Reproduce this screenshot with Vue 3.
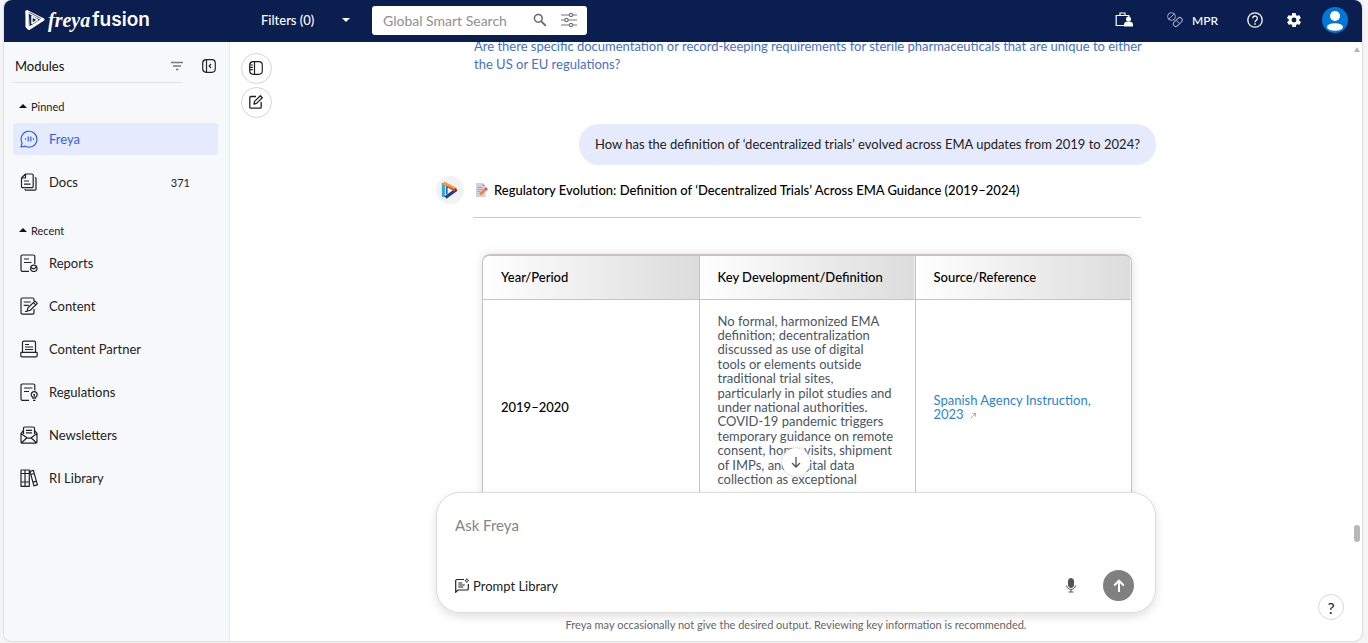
<script setup>
import { ref } from 'vue'

const search = ref('')
const prompt = ref('')

const pinned = [
  { name: 'Freya', icon: 'chat', active: true },
  { name: 'Docs', icon: 'docs', count: 371 },
]
const recent = [
  { name: 'Reports', icon: 'reports' },
  { name: 'Content', icon: 'content' },
  { name: 'Content Partner', icon: 'partner' },
  { name: 'Regulations', icon: 'regulations' },
  { name: 'Newsletters', icon: 'news' },
  { name: 'RI Library', icon: 'library' },
]
const groups = [
  { title: 'Pinned', items: pinned },
  { title: 'Recent', items: recent },
]

const icons = {
  chat: 'M1 17l1.1-4A7.9 7.9 0 1 1 5.4 16.200z M5.500 8.200v1.600 M8.200 6.500v5 M10.800 6.500v5 M13.400 8.200v1.600',
  docs: 'M5.500 1H12a1.200 1.200 0 0 1 1.200 1.200v11.300a1.200 1.200 0 0 1-1.200 1.200H2.700a1.200 1.200 0 0 1-1.200-1.200V5z M5.500 1v4h-4 M4 8h5 M4 11.200h6.500 M14.800 4.500h.2a1 1 0 0 1 1 1V16a1.200 1.200 0 0 1-1.200 1.200H6a1 1 0 0 1-1-1V16',
  reports: 'M9 17.300H2.300A1.300 1.300 0 0 1 1 16V2.300A1.300 1.300 0 0 1 2.300 1h11.200a1.300 1.300 0 0 1 1.300 1.300V10 M4 5h5 M4 8.500h7.500 M17 14.300a3.200 3.200 0 1 1-6.400 0a3.200 3.200 0 1 1 6.400 0 M10.800 13.500l2.800 1.500 3-2',
  content: 'M14 12v3.800a1.400 1.400 0 0 1-1.400 1.400H2.400A1.400 1.400 0 0 1 1 15.800V2.400A1.400 1.400 0 0 1 2.400 1h10.200A1.400 1.400 0 0 1 14 2.400V4 M3.700 5h7 M3.700 8.300h5 M7 14.300l1-3.500 7-6.700 2.300 2.300-7 6.900z M5 14.500h2 M13.500 5.700l2.200 2.200',
  partner: 'M2.500 12V2.500A1.300 1.300 0 0 1 3.800 1.200h10.400a1.300 1.300 0 0 1 1.300 1.300V12 M1.500 12.300h15a.7.7 0 0 1 .7.7v2.500a1.300 1.300 0 0 1-1.300 1.300H2.100a1.300 1.300 0 0 1-1.300-1.300V13a.7.7 0 0 1 .7-.7z M5 4.500h4 M5 7h8 M5 9.500h8',
  regulations: 'M9 17.300H2.300A1.300 1.300 0 0 1 1 16V2.300A1.300 1.300 0 0 1 2.300 1h11.200a1.300 1.300 0 0 1 1.300 1.300V7.500 M4 5h8.500 M4 8.500h5 M12.800 15.200v-.9a3 3 0 1 1 2.800 0v.9z M13 17.300h2.400 M14.200 12v2 M13.300 11.500h1.800',
  news: 'M3.500 8V2.300A1.300 1.300 0 0 1 4.800 1h8.400a1.300 1.300 0 0 1 1.300 1.300V8 M3.500 4.500L1 7.300V16a1.200 1.200 0 0 0 1.200 1.200h13.600A1.200 1.200 0 0 0 17 16V7.300l-2.500-2.800 M1 7.500l6.500 4.700h3L17 7.500 M1.500 16.800l5.500-5 M16.500 16.800l-5.500-5 M6 4.300h6 M6 6.800h6',
  library: 'M1 1h4v16.300H1z M5 1h4.300v16.300H5z M1 4.500h8.300 M1 13h8.300 M10 2.300l3.400-1 4 14.500-3.500 1z M10.800 5.500l3.500-1 M13 13.200l3.500-1',
}

const columns = ['Year/Period', 'Key Development/Definition', 'Source/Reference']
const definition = [
  'No formal, harmonized EMA',
  'definition; decentralization',
  'discussed as use of digital',
  'tools or elements outside',
  'traditional trial sites,',
  'particularly in pilot studies and',
  'under national authorities.',
  'COVID-19 pandemic triggers',
  'temporary guidance on remote',
  'consent, home visits, shipment',
  'of IMPs, and digital data',
  'collection as exceptional',
  'measures.',
]
</script>

<template>
  <div class="frame">
    <header class="topbar">
      <a class="brand" href="#" aria-label="freya fusion">
        <svg width="20" height="22" viewBox="0 0 20 22" fill="none" stroke="#fff" stroke-linejoin="round">
          <path d="M2 2.500L18 10.500 4 19.500z" stroke-width="3" />
          <path d="M1.700 2v15.500L4 20" stroke-width="2.500" />
          <path d="M7 7.500v7l5.500-3.700z" stroke-width="1.500" />
          <path d="M4.200 4.500v12.700 M4.500 3.500l11.500 6" stroke="#0b1e50" stroke-width="0.700" />
        </svg>
        <span class="freya">freya</span><span class="fusion">fusion</span>
      </a>
      <button class="filters" type="button">
        <span>Filters (0)</span>
        <svg width="8" height="4" viewBox="0 0 8 4"><path d="M0 0h8L4 4z" fill="#fff" /></svg>
      </button>
      <div class="search">
        <input v-model="search" type="text" placeholder="Global Smart Search" aria-label="Global Smart Search" />
        <button type="button" aria-label="Search">
          <svg width="14" height="14" viewBox="0 0 14 14" fill="none" stroke="#666" stroke-width="1.500"><circle cx="5.300" cy="5.300" r="3.900" /><path d="M8.300 8.300l4.500 4.500" stroke-width="1.800" /></svg>
        </button>
        <button type="button" aria-label="Search options">
          <svg width="16" height="16" viewBox="0 0 16 16" fill="#fff" stroke="#777" stroke-width="1.200"><path d="M0 3h16M0 8h16M0 13h16" /><circle cx="10" cy="3" r="1.700" /><circle cx="5.500" cy="8" r="1.700" /><circle cx="10" cy="13" r="1.700" /></svg>
        </button>
      </div>
      <div class="tools">
        <button type="button" aria-label="Workspace">
          <svg width="18" height="16" viewBox="0 0 18 16"><path d="M9.500 13.500H1.200V3.500h12.600v2 M5 3.500V1h5v2.500" fill="none" stroke="#fff" stroke-width="1.200" /><circle cx="13.500" cy="7" r="2.500" fill="#fff" /><path d="M9 14.500v-2c0-2 1.500-3 4.500-3s4.500 1 4.500 3v2z" fill="#fff" /></svg>
        </button>
        <button class="mpr" type="button">
          <svg width="16" height="16" viewBox="0 0 16 16" fill="none" stroke="#a6aec6" stroke-width="1"><circle cx="4.500" cy="4.500" r="3.900" /><path d="M1.800 7.200l5.400-5.400" /><rect x="5.500" y="7.500" width="10.500" height="5" rx="2.500" transform="rotate(-45 10.750 10)" /><path d="M9 8.200l3.500 3.500" /></svg>
          <span>MPR</span>
        </button>
        <button type="button" aria-label="Help">
          <svg width="16" height="16" viewBox="0 0 16 16" fill="none" stroke="#fff" stroke-width="1.300"><circle cx="8" cy="8" r="7.200" /><path d="M5.700 6.300a2.300 2.300 0 1 1 3.600 1.900C8.300 8.900 8 9.200 8 10.200" /><path d="M8 11.300v1.500" stroke-width="1.500" /></svg>
        </button>
        <button type="button" aria-label="Settings">
          <svg width="14" height="14" viewBox="2 2 20 20"><path fill="#fff" d="M19.400 13a7.500 7.500 0 0 0 0-2l2.100-1.600a.5.5 0 0 0 .1-.7l-2-3.400a.5.5 0 0 0-.6-.2l-2.500 1a7.300 7.300 0 0 0-1.700-1l-.4-2.700a.5.500 0 0 0-.5-.4h-4a.5.500 0 0 0-.5.4l-.4 2.700a7.300 7.300 0 0 0-1.700 1l-2.500-1a.5.500 0 0 0-.6.200l-2 3.400a.5.500 0 0 0 .1.700L4.600 11a7.500 7.500 0 0 0 0 2l-2.100 1.600a.5.500 0 0 0-.1.700l2 3.400c.1.200.4.300.6.200l2.500-1a7.300 7.300 0 0 0 1.700 1l.4 2.700c0 .2.200.4.500.4h4c.3 0 .5-.2.500-.4l.4-2.700a7.300 7.300 0 0 0 1.700-1l2.500 1c.2.100.5 0 .6-.2l2-3.400a.5.500 0 0 0-.1-.7zM12 15.500a3.500 3.500 0 1 1 0-7 3.500 3.500 0 0 1 0 7z" /></svg>
        </button>
        <button type="button" aria-label="Account">
          <svg width="26" height="26" viewBox="0 0 26 26"><circle cx="13" cy="13" r="13" fill="#0078d9" /><circle cx="13" cy="9" r="5" fill="#fff" /><ellipse cx="13" cy="20" rx="8" ry="3.800" fill="#fff" /></svg>
        </button>
      </div>
    </header>

    <div class="body">
      <aside class="sidebar">
        <div class="side-head">
          <h2>Modules</h2>
          <button type="button" aria-label="Sort modules">
            <svg width="12" height="10" viewBox="0 0 12 10" stroke="#777" stroke-width="1.400"><path d="M0 1.500h12M2 5h8M5 8.500h2.500" /></svg>
          </button>
          <button type="button" aria-label="Collapse sidebar">
            <svg width="14" height="14" viewBox="0 0 14 14" fill="none" stroke="#222" stroke-width="1.200"><rect x="0.700" y="0.700" width="12.600" height="12.600" rx="3.500" /><path d="M4.500 0.700v12.600M9 5L7.200 7 9 9" /></svg>
          </button>
        </div>
        <nav v-for="g in groups" :key="g.title" :aria-label="g.title">
          <h3>
            <svg width="8" height="4" viewBox="0 0 8 4"><path d="M0 4h8L4 0z" fill="#111" /></svg>{{ g.title }}
          </h3>
          <ul>
            <li v-for="m in g.items" :key="m.name">
              <a href="#" :class="{ active: m.active }">
                <svg width="18" height="18" viewBox="0 0 18 18" fill="none" stroke="currentColor" stroke-width="1.200" stroke-linejoin="round"><path :d="icons[m.icon]" /></svg>
                <span>{{ m.name }}</span>
                <small v-if="m.count">{{ m.count }}</small>
              </a>
            </li>
          </ul>
        </nav>
      </aside>

      <main class="main">
        <div class="scroller">
          <div class="thread">
            <a class="suggestion" href="#">Are there specific documentation or record-keeping requirements for sterile pharmaceuticals that are unique to either<br />the US or EU regulations?</a>
            <p class="question">How has the definition of ‘decentralized trials’ evolved across EMA updates from 2019 to 2024?</p>
            <div class="reply">
              <span class="bot">
                <svg width="18" height="20" viewBox="0 0 18 20" fill="none" stroke-width="3.400" stroke-linejoin="round">
                  <path d="M2.500 17V3" stroke="#38a9dc" />
                  <path d="M2.500 3L15.500 10" stroke="#f59a2c" />
                  <path d="M15.500 9.500L4.500 17.500" stroke="#243a8f" />
                  <path d="M5.500 6.500L14 10.500" stroke="#e4475a" stroke-width="1.500" />
                  <path d="M5.800 6.500v7.500" stroke="#2860b5" stroke-width="1.600" />
                  <path d="M7 8v5l4-2.500z" fill="#fff" />
                </svg>
              </span>
              <article>
                <h1>
                  <svg width="12" height="14" viewBox="0 0 12 14"><path d="M0 0h6.500L9.500 3v11H0z" fill="#d4cfdf" /><path d="M6.500 0v3h3z" fill="#aaa2bd" /><path d="M1.500 4.500h5M1.500 6.500h5M1.500 8.500h3" stroke="#a9a2b8" /><path d="M4 11.500L10.500 5.500" stroke="#ff7b3d" stroke-width="2.500" /><path d="M9.500 6.500l1.500-1.300" stroke="#e23f5c" stroke-width="2.600" /></svg>
                  Regulatory Evolution: Definition of ‘Decentralized Trials’ Across EMA Guidance (2019–2024)
                </h1>
                <div class="table-box">
                  <table>
                    <thead>
                      <tr><th v-for="c in columns" :key="c" scope="col">{{ c }}</th></tr>
                    </thead>
                    <tbody>
                      <tr>
                        <th scope="row">2019–2020</th>
                        <td><template v-for="(line, i) in definition" :key="i"><br v-if="i" />{{ line }}</template></td>
                        <td>
                          <a href="#">Spanish Agency Instruction,<br />2023 <svg width="6" height="6" viewBox="0 0 6 6" fill="none" stroke="#999"><path d="M0.500 5.500l5-5M2.500 0.500h3v3" stroke-width="0.800" /></svg></a>
                        </td>
                      </tr>
                    </tbody>
                  </table>
                </div>
              </article>
            </div>
          </div>
          <button class="to-latest" type="button" aria-label="Scroll to latest">
            <svg width="10" height="12" viewBox="0 0 10 12" fill="none" stroke="#555" stroke-width="1.300"><path d="M5 1v10M1 7l4 4 4-4" /></svg>
          </button>
        </div>

        <form class="composer" @submit.prevent>
          <textarea v-model="prompt" placeholder="Ask Freya" aria-label="Ask Freya" rows="2"></textarea>
          <div class="actions">
            <button class="library" type="button">
              <svg width="14" height="15" viewBox="0 0 14 15" fill="none" stroke="#222" stroke-width="1.200"><path d="M9 1.500H2A1.300 1.300 0 0 0 .7 2.800v11.400L3 12h9a1.300 1.300 0 0 0 1.300-1.300V6 M3.300 5h4 M3.300 7h6.500 M3.300 9h5" /><path d="M11.800 .6l.6 1.400 1.300.6-1.300.6-.6 1.400-.6-1.400-1.300-.6 1.300-.6z" stroke-width="0.800" /></svg>
              Prompt Library
            </button>
            <button class="mic" type="button" aria-label="Dictate">
              <svg width="10" height="15" viewBox="0 0 10 15" fill="none" stroke="#555"><rect x="2.500" y="0.500" width="5" height="9" rx="2.500" fill="#555" /><path d="M.6 7.500c.3 5.200 8.500 5.200 8.800 0M5 11.500V14M2.500 14h5" /></svg>
            </button>
            <button class="send" type="submit" aria-label="Send">
              <svg width="12" height="13" viewBox="0 0 12 13" fill="none" stroke="#fff" stroke-width="2"><path d="M6 13V2M1.200 6.500L6 1.700l4.800 4.800" /></svg>
            </button>
          </div>
        </form>
        <p class="note">Freya may occasionally not give the desired output. Reviewing key information is recommended.</p>

        <div class="quick">
          <button type="button" aria-label="Toggle history">
            <svg width="14" height="14" viewBox="0 0 14 14" fill="none" stroke="#222" stroke-width="1.200"><rect x="0.700" y="0.700" width="12.600" height="12.600" rx="3.500" /><path d="M5.500 .7v12.600M1 4h2.800M1 6.300h2.800M1 8.600h2.800" /></svg>
          </button>
          <button type="button" aria-label="New chat">
            <svg width="14" height="14" viewBox="0 0 14 14" fill="none" stroke="#222" stroke-width="1.300"><path d="M7 1.500H1.800a1 1 0 0 0-1 1v9.700a1 1 0 0 0 1 1h9.400a1 1 0 0 0 1-1V7" /><path d="M5 9l.6-2.600L11.300.8l2 1.900L7.600 8.400z" stroke-linejoin="round" /></svg>
          </button>
        </div>
        <div class="scrollbar" aria-hidden="true"><i class="up"></i><i class="thumb"></i></div>
        <button class="help" type="button" aria-label="Support">?</button>
      </main>
    </div>
  </div>
</template>

<style>
body { margin: 0; background: #f5f5f5; }
</style>

<style scoped>
* { box-sizing: border-box; }
.frame {
  display: flex; flex-direction: column; height: calc(100vh - 2px); margin: 0 6px 2px 4px;
  overflow: hidden; border-radius: 8px; background: #fff; box-shadow: 0 0 2px #aaa;
  font-family: Lato, "Liberation Sans", sans-serif; font-size: 13px; color: #222;
}
button { display: inline-flex; align-items: center; justify-content: center; padding: 0; border: 0; background: none; font: inherit; color: inherit; cursor: pointer; }
a { text-decoration: none; }
h1, h2, h3, p, ul { margin: 0; padding: 0; font-weight: 400; }
svg { flex: none; }

.topbar { display: flex; align-items: center; flex: none; height: 42px; padding: 0 14px 2px 21px; background: #0b1e50; color: #fff; }
.brand { display: flex; align-items: center; width: 236px; height: 40px; color: #fff; }
.freya { margin: 0 2px 0 3px; font: italic 700 20px "Liberation Serif", serif; }
.fusion { padding-bottom: 2px; font: 600 19px Inter, sans-serif; }
.filters { justify-content: space-between; width: 89px; margin-right: 22px; font-weight: 500; }
.search { display: flex; align-items: center; gap: 14px; width: 215px; height: 29px; padding: 0 10px 0 11px; border-radius: 3px; background: #fff; }
.search input { flex: 1; min-width: 0; height: 28px; padding: 0; border: 0; outline: 0; background: none; font: inherit; font-size: 14px; }
.search input::placeholder { color: #8f8f8f; }
.tools { display: flex; align-items: center; margin-left: auto; }
.tools button { margin-left: 24px; }
.tools .mpr { margin: 0 5px 0 34px; gap: 9px; font-size: 12px; font-weight: 500; }
.tools button:last-child { margin-left: 21px; }

.body { display: flex; flex: 1; min-height: 0; }
.sidebar { flex: none; width: 226px; border-right: 1px solid #e9ebee; background: #f7f8fa; }
.side-head { display: flex; align-items: center; position: relative; height: 41px; margin: 0 0 13px 9px; padding: 7px 13px 0 2px; }
.side-head::after { content: ""; position: absolute; left: 0; right: 47px; bottom: 0; border-bottom: 1px solid #dfe1e4; }
.side-head h2 { flex: 1; color: #111; font-size: 13px; }
.side-head button + button { margin-left: 19px; }
.sidebar nav { margin: 0 11px 22px 9px; }
.sidebar h3 { display: flex; align-items: center; gap: 4px; height: 20px; padding-left: 6px; font-size: 11px; }
.sidebar ul { display: flex; flex-direction: column; gap: 11px; margin-top: 7px; list-style: none; }
.sidebar li a { display: flex; align-items: center; gap: 11px; height: 32px; padding: 0 28px 0 7px; border-radius: 3px; color: #222; }
.sidebar li a.active { background: #e5eafc; color: #3561ea; }
.sidebar li span { flex: 1; }
.sidebar li small { font-size: 11px; }

.main { display: flex; flex-direction: column; position: relative; flex: 1; min-width: 0; }
.scroller { position: relative; flex: 1; min-height: 0; overflow: hidden; }
.thread { display: flex; flex-direction: column; max-width: 720px; margin: -5px auto 0; }
.suggestion { margin-left: 38px; line-height: 18px; color: #4570cc; white-space: nowrap; }
.question { align-self: flex-end; margin: 51px 0 11px; padding: 0 16px; border-radius: 20px; background: #e5eafc; line-height: 41px; white-space: nowrap; }
.reply { display: flex; gap: 9px; }
.bot { display: flex; align-items: center; justify-content: center; flex: none; width: 28px; height: 28px; border-radius: 50%; background: #f2f2f2; }
article { flex: 1; min-width: 0; margin-right: 15px; }
h1 { display: flex; align-items: center; gap: 6px; height: 42px; padding: 0 0 13px 3px; border-bottom: 1px solid #ccc; color: #000; font-size: 13px; font-weight: 500; white-space: nowrap; }
.table-box { margin: 36px 9px 0; overflow: hidden; border: 1px solid #c8c2c4; border-width: 2px 1px; border-radius: 8px; box-shadow: 0 0 10px rgba(0, 0, 0, 0.12); }
table { width: 100%; table-layout: fixed; border-collapse: collapse; font-size: 13px; line-height: 1.11; }
th, td { padding: 14px 18px; border: 1px solid #c8c2c4; border-width: 0 1px 1px 0; text-align: left; vertical-align: middle; font-weight: 400; white-space: nowrap; }
th { color: #000; font-weight: 500; }
thead th { height: 43px; background: linear-gradient(90deg, #fff, #dcdcdc); }
td { color: #4b5563; }
th:last-child, td:last-child { border-right: 0; }
td a { color: #2a82d6; }
td svg { margin-left: 3px; }
.to-latest { position: absolute; left: 50%; bottom: 16px; width: 28px; height: 28px; margin-left: -14px; border-radius: 50%; background: #fff; box-shadow: 0 0 3px #bbb; }

.composer { display: flex; flex-direction: column; flex: none; position: relative; width: 720px; max-width: 100%; margin: 0 auto; padding: 22px 21px 11px 18px; border: 1px solid #ddd; border-radius: 24px; background: #fff; box-shadow: 0 4px 10px rgba(0, 0, 0, 0.12); }
.composer textarea { height: 55px; padding: 0; border: 0; outline: 0; resize: none; background: none; font: inherit; font-size: 15px; line-height: 20px; }
.composer textarea::placeholder { color: #858585; }
.actions { display: flex; align-items: center; }
.library { gap: 4px; margin-right: auto; }
.mic { margin-right: 27px; }
.send { width: 31px; height: 31px; border-radius: 50%; background: #808080; }
.note { height: 28px; line-height: 24px; text-align: center; color: #666; font-size: 11px; }

.quick { display: flex; flex-direction: column; gap: 3px; position: absolute; top: 11px; left: 11px; }
.quick button { width: 31px; height: 31px; padding: 0 1px 1px 0; border: 1px solid #d5d5d5; border-radius: 50%; background: #fff; }
.scrollbar { position: absolute; top: 0; right: 1px; bottom: 0; width: 8px; }
.up { position: absolute; top: 5px; left: 1px; border: 3px solid transparent; border-top: 0; border-bottom: 5px solid #b5b5b5; }
.thumb { position: absolute; bottom: 99px; left: 1px; width: 6px; height: 17px; border-radius: 3px; background: #b8b8b8; }
.help { position: absolute; right: 18px; bottom: 21px; width: 26px; height: 26px; border: 1px solid #d8d8d8; border-radius: 50%; background: #fff; font-size: 16px; }
</style>
